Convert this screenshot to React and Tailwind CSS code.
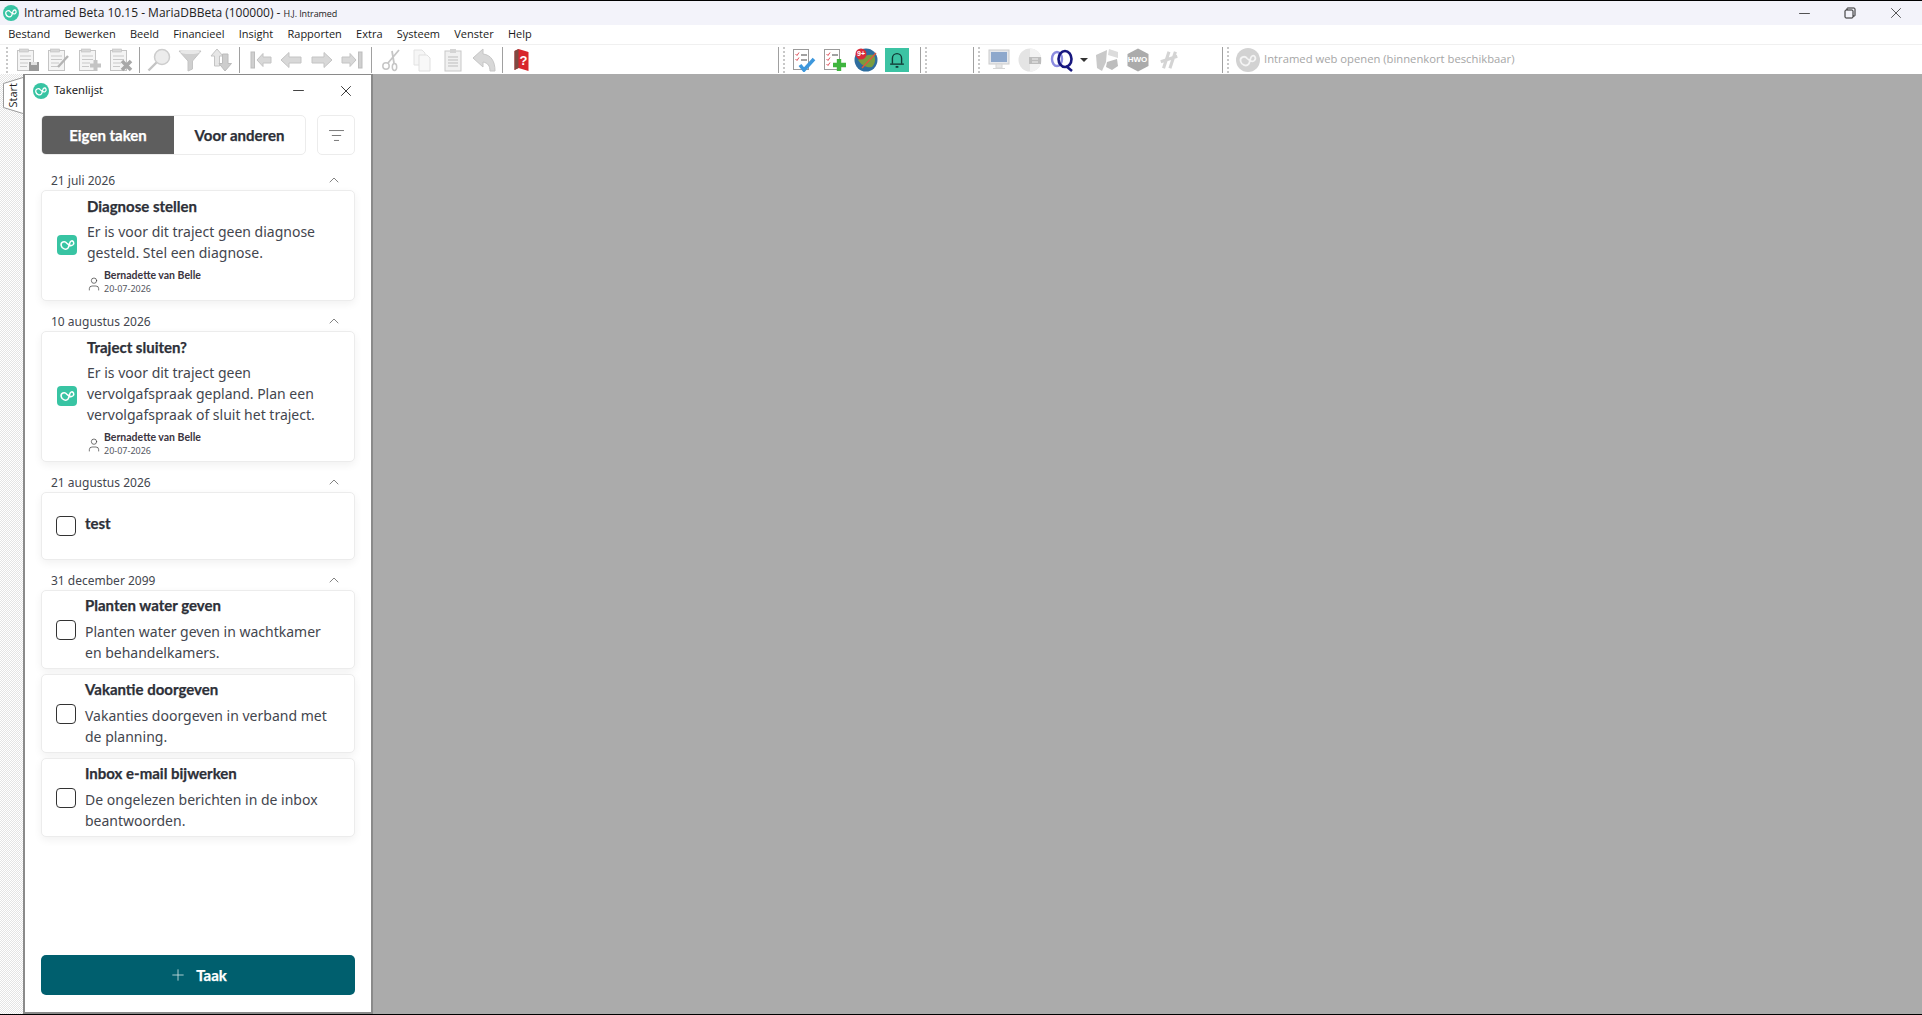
import React from "react";
import { ChevronUp, Minus, X, Plus, User, ListFilter } from "lucide-react";

const menus = ["Bestand", "Bewerken", "Beeld", "Financieel", "Insight", "Rapporten", "Extra", "Systeem", "Venster", "Help"];

const Heart = ({ className, stroke = "#fff" }) => (
  <svg viewBox="0 0 24 24" className={className} fill="none" stroke={stroke} strokeWidth="2.1" strokeLinecap="round" strokeLinejoin="round">
    <path transform="rotate(-14 12 12)" d="M11.5 10 C9.5 5.5 3 6 3 11.5 C3 16 8 19.5 11.5 17 C14.5 14.5 15 9 18 8.5 C21.5 8 22.5 13 19 14.5 C16.5 15.5 13.5 13.5 11.5 10 Z" />
  </svg>
);

const Doc = ({ children }) => (
  <svg viewBox="0 0 24 24" className="w-6 h-6">
    <rect x="1.5" y="2.5" width="16" height="20" fill="#f4f4f4" stroke="#c4c4c4" />
    <rect x="3.5" y="1" width="9" height="3" fill="#d8d8d8" stroke="#c0c0c0" strokeWidth="0.6" />
    <path d="M4 8h11M4 11.5h11M4 15h8M4 18.5h7" stroke="#c8c8c8" />
    {children}
  </svg>
);

const Arrow = ({ flip, bar }) => (
  <svg viewBox="0 0 24 24" className={`w-6 h-6 ${flip ? "-scale-x-100" : ""}`}>
    <path d={bar ? "M9 12 L15 5.5 V9 H23 V15 H15 V18.5 Z" : "M2 12 L10 4.5 V9 H22 V15 H10 V19.5 Z"} fill="#d8d8d8" stroke="#c4c4c4" />
    {bar && <rect x="3" y="4" width="3.5" height="16" fill="#d0d0d0" stroke="#bdbdbd" />}
  </svg>
);

const gray = [
  <Doc><rect x="13" y="14" width="10" height="9" fill="#9a9a9a" /><rect x="15" y="14" width="6" height="3" fill="#e2e2e2" /></Doc>,
  <Doc><path d="M11 19 L21 8" stroke="#b4b4b4" strokeWidth="2.4" /></Doc>,
  <Doc><path d="M17.5 12v11M12 17.5h11" stroke="#c4c4c4" strokeWidth="4" /></Doc>,
  <Doc><path d="M13 13l9 9M22 13l-9 9" stroke="#a8a8a8" strokeWidth="3.6" /></Doc>,
  "sep",
  <svg viewBox="0 0 24 24" className="w-6 h-6"><circle cx="15" cy="9" r="7.5" fill="#ececec" stroke="#cdcdcd" strokeWidth="1.5" /><path d="M9.5 14.5 L1.5 22.5" stroke="#c4c4c4" strokeWidth="2.4" /></svg>,
  <svg viewBox="0 0 24 24" className="w-6 h-6"><path d="M1 3 H23 L14.5 13 V21 L10 23 V13 Z" fill="#cfcfcf" stroke="#c4c4c4" /><ellipse cx="12" cy="4" rx="10" ry="2" fill="#e8e8e8" /></svg>,
  <svg viewBox="0 0 24 24" className="w-6 h-6"><path d="M8 1 L14 8 H10.5 V18 H5.5 V8 H2 Z" fill="#e6e6e6" stroke="#c4c4c4" /><path d="M16 23 L22.5 15.5 H19 V6 H13.5 V15.5 H10 Z" fill="#cdcdcd" stroke="#bcbcbc" /></svg>,
  "sep",
  <Arrow flip={false} bar />,
  <Arrow />,
  <Arrow flip />,
  <Arrow flip bar />,
  "sep",
  <svg viewBox="0 0 24 24" className="w-6 h-6" fill="none" stroke="#c6c6c6"><path d="M20 2 L9 15M13 3 L15 15" strokeWidth="1.8" /><circle cx="7" cy="18" r="3.2" strokeWidth="1.5" /><ellipse cx="15.5" cy="19" rx="2.2" ry="3.4" strokeWidth="1.5" /></svg>,
  <svg viewBox="0 0 24 24" className="w-6 h-6"><path d="M4 2h8l3 3v12H4z" fill="#f6f6f6" stroke="#e2e2e2" /><path d="M9 7h8l3 3v13H9z" fill="#f8f8f8" stroke="#e0e0e0" /></svg>,
  <svg viewBox="0 0 24 24" className="w-6 h-6"><rect x="4" y="3" width="16" height="20" fill="#f0f0f0" stroke="#c8c8c8" /><rect x="9" y="1" width="6" height="4" fill="#d4d4d4" /><path d="M7 9h10M7 12h10M7 15h10M7 18h10" stroke="#bdbdbd" /></svg>,
  <svg viewBox="0 0 24 24" className="w-6 h-6"><path d="M1 10 L11 1 V6 C19 7 23 13 23 23 H18 C18 18 16 15 11 14 V19 Z" fill="#d8d8d8" stroke="#c6c6c6" /></svg>,
  "sep",
  <svg viewBox="0 0 24 24" className="w-6 h-6 -translate-x-[2.5px]"><path d="M6 3 L10 1 L20 4 V23 L10 20 L6 22 Z" fill="#d8262c" /><path d="M6 3 L10 1 V20 L6 22 Z" fill="#7d4a42" /><text x="15" y="17" fontSize="13" fontWeight="700" fill="#fff" textAnchor="middle" fontFamily="Liberation Sans, sans-serif">?</text></svg>,
];

const Handle = () => <div className="w-0 h-[26px] border-l-2 border-dotted border-[#c8c8c8]" />;
const Sep = () => <div className="w-px h-[26px] bg-[#a0a0a0]" />;
const Slot = ({ children, className = "w-[31px]" }) => <div className={`${className} h-[30px] flex items-center justify-center`}>{children}</div>;

const Toolbar = () => (
  <div className="h-[30px] bg-white flex items-center shrink-0 border-t border-[#f0f0f0]">
    <div className="ml-[6px] mr-[4px]"><Handle /></div>
    {gray.map((g, i) => (g === "sep" ? <div key={i} className="ml-[2.5px] mr-[4px]"><Sep /></div> : <Slot key={i}>{g}</Slot>))}
    <div className="ml-[240px] flex items-center gap-[4px]"><Sep /><Handle /></div>
    <div className="ml-[3px] flex items-center">
      <Slot>
        <svg viewBox="0 0 24 24" className="w-6 h-6">
          <rect x="1.5" y="1.5" width="15" height="20" fill="#fff" stroke="#9a9a9a" />
          <path d="M3.5 6l1.5 1.5 2-3M3.5 11l1.5 1.5 2-3" stroke="#e0505a" fill="none" />
          <path d="M9 7h6M9 12h6" stroke="#444" />
          <path d="M8 17l4 5 10-11" stroke="#3d97dc" strokeWidth="3.6" fill="none" />
        </svg>
      </Slot>
      <Slot>
        <svg viewBox="0 0 24 24" className="w-6 h-6">
          <rect x="1.5" y="1.5" width="15" height="20" fill="#fff" stroke="#9a9a9a" />
          <path d="M3.5 6l1.5 1.5 2-3M3.5 11l1.5 1.5 2-3M3.5 16l1.5 1.5 2-3" stroke="#e0505a" fill="none" />
          <path d="M9 7h6" stroke="#444" />
          <path d="M16 11v12M10 17h13" stroke="#3fb53f" strokeWidth="4.4" />
        </svg>
      </Slot>
      <Slot>
        <svg viewBox="0 0 24 24" className="w-6 h-6">
          <circle cx="12" cy="12" r="11.5" fill="#2e6d9e" />
          <path d="M4 12c5-4 11-6 16-5 2 4 1 9-2 12-5 1-10-1-14-7z" fill="#7a9c3e" />
          <path d="M8 20 L22 5" stroke="#e0573c" strokeWidth="1.4" />
          <circle cx="7" cy="6" r="5.5" fill="#d82b3a" />
          <text x="7" y="8.4" fontSize="7" fontWeight="700" fill="#fff" textAnchor="middle" fontFamily="Liberation Sans, sans-serif">9+</text>
        </svg>
      </Slot>
      <Slot>
        <div className="w-6 h-6 bg-[#3cc3a3] flex items-center justify-center">
          <svg viewBox="0 0 24 24" className="w-[22px] h-[22px]" fill="none" stroke="#123a36" strokeWidth="1.5">
            <path d="M7 16V10a5 5 0 0 1 10 0v6" />
            <path d="M4.5 16.5h15" />
            <path d="M10.5 19.5h3" strokeWidth="2" />
          </svg>
        </div>
      </Slot>
    </div>
    <div className="ml-[8px] flex items-center gap-[4px]"><Sep /><Handle /></div>
    <div className="ml-[46px] flex items-center gap-[4px]"><Sep /><Handle /></div>
    <div className="ml-[3px] flex items-center">
      <Slot>
        <svg viewBox="0 0 24 24" className="w-6 h-6">
          <rect x="2" y="2" width="20" height="14" fill="#e6e8ec" stroke="#cccccc" />
          <rect x="4" y="4" width="16" height="10" fill="#8ea8cc" />
          <path d="M9 16h6v4H9zM6 20.5h12" stroke="#d6d6d6" fill="#e8e8e8" />
        </svg>
      </Slot>
      <Slot>
        <svg viewBox="0 0 24 24" className="w-6 h-6">
          <circle cx="12" cy="12" r="11.5" fill="#e4e4e4" />
          <path d="M12 .5a11.5 11.5 0 0 1 0 23z" fill="#f2f2f2" />
          <rect x="11" y="9" width="12" height="7" fill="#bdbdbd" />
          <path d="M14 11h6M14 14h6" stroke="#efefef" />
        </svg>
      </Slot>
      <svg viewBox="0 0 24 24" className="w-6 h-6 ml-[5px]" fill="none">
        <ellipse cx="7" cy="11" rx="5" ry="7" stroke="#8c8ce0" strokeWidth="2.4" />
        <ellipse cx="15" cy="11" rx="6.5" ry="8" stroke="#17177f" strokeWidth="2.6" />
        <path d="M16 18l6 5" stroke="#17177f" strokeWidth="2.6" />
      </svg>
      <div className="ml-[6px] mr-[3px] w-0 h-0 border-x-[4px] border-x-transparent border-t-[4px] border-t-[#333]" />
      <Slot>
        <svg viewBox="0 0 24 24" className="w-6 h-6">
          <path d="M1 7 L12 2 L11 14 L7 23 L2 20 Z" fill="#c9c9c9" />
          <path d="M14 1 L23 4 V10 L13 7 Z" fill="#dcdcdc" />
          <path d="M12 14 L22 11 L23 18 L17 22 L11 19 Z" fill="#bdbdbd" />
        </svg>
      </Slot>
      <Slot>
        <div className="relative w-6 h-6 flex items-center justify-center">
          <svg viewBox="0 0 24 24" className="absolute inset-0 w-6 h-6"><path d="M12 .5 L22.5 6 V18 L12 23.5 L1.5 18 V6 Z" fill="#ababab" /></svg>
          <span className="relative text-[8px] leading-none font-bold text-white font-['Liberation_Sans',sans-serif]">HWO</span>
        </div>
      </Slot>
      <Slot>
        <svg viewBox="0 0 24 24" className="w-[22px] h-[22px]" fill="none" stroke="#d4d4d4" strokeWidth="3.4">
          <path d="M12 3 L6 21M19 3 L13 21M3 14 L21 8" />
        </svg>
      </Slot>
    </div>
    <div className="ml-[38px] flex items-center gap-[4px]"><Sep /><Handle /></div>
    <div className="ml-[7px] w-6 h-6 rounded-full bg-[#d2d2d2] flex items-center justify-center">
      <Heart className="w-[20px] h-[20px]" stroke="#f4f4f4" />
    </div>
    <span className="ml-[4px] text-[11.25px] text-[#a6a6a6] font-['Open_Sans',sans-serif] whitespace-nowrap">Intramed web openen (binnenkort beschikbaar)</span>
  </div>
);

const TitleBar = () => (
  <div className="h-[24px] mt-px bg-[#f3f3fa] flex items-center shrink-0">
    <div className="ml-[3px] w-[16px] h-[16px] rounded-full bg-[#38c4a3] flex items-center justify-center">
      <Heart className="w-[14px] h-[14px]" />
    </div>
    <span className="ml-[5px] text-[12px] text-[#222] font-['Open_Sans',sans-serif] whitespace-nowrap">Intramed Beta 10.15 - MariaDBBeta (100000) - <span className="text-[9px] font-medium tracking-[-0.1px]">H.J. Intramed</span></span>
    <div className="ml-auto mr-[3px] flex items-center text-[#222]">
      <Slot className="w-[46px]"><Minus size={17} strokeWidth={1.1} /></Slot>
      <Slot className="w-[46px]">
        <svg viewBox="0 0 12 12" className="w-[12px] h-[12px]" fill="none" stroke="#222">
          <rect x="1" y="3" width="8" height="8" rx="1" />
          <path d="M3 3V1.5a.5.5 0 0 1 .5-.5H10a1 1 0 0 1 1 1v6.5a.5.5 0 0 1-.5.5H9" />
        </svg>
      </Slot>
      <Slot className="w-[46px]"><X size={18} strokeWidth={1} /></Slot>
    </div>
  </div>
);

const MenuBar = () => (
  <div className="h-[19px] bg-white flex items-center pl-[1px] shrink-0">
    {menus.map((m) => (
      <span key={m} className="px-[7.15px] text-[11px] text-[#1a1a1a] font-['Open_Sans',sans-serif]">{m}</span>
    ))}
  </div>
);

const cardCls = "bg-white border border-[#ececec] rounded-[5px] shadow-[0_3px_8px_rgba(0,0,0,0.06)]";
const titleCls = "text-[15px] leading-[20px] font-bold [-webkit-text-stroke:0.25px] text-[#2d3038] font-['Lato',sans-serif]";
const bodyCls = "text-[14px] leading-[21px] text-[#43464e] font-['Noto_Sans',sans-serif]";
const tabCls = "flex items-center justify-center text-[15px] font-bold [-webkit-text-stroke:0.25px] font-['Lato',sans-serif]";

const DateRow = ({ children }) => (
  <div className="h-[20px] pl-[10px] pr-[13px] flex items-center justify-between">
    <span className="mt-[1px] text-[12px] text-[#43464e] font-['Noto_Sans',sans-serif]">{children}</span>
    <ChevronUp size={16} strokeWidth={1} className="text-[#444]" />
  </div>
);

const SystemCard = ({ title, lines, height }) => (
  <div className={`${cardCls} ${height} flex items-center pl-[15px]`}>
    <div className="w-5 h-5 -mt-[2px] rounded-[4px] bg-[#38c4a3] flex items-center justify-center shrink-0">
      <Heart className="w-[17px] h-[17px]" />
    </div>
    <div className="ml-[10px] flex flex-col">
      <div className={titleCls}>{title}</div>
      <div className={`${bodyCls} mt-[5px]`}>
        {lines.map((l) => <div key={l}>{l}</div>)}
      </div>
      <div className="flex items-center mt-[6px]">
        <User size={16} strokeWidth={1.1} className="text-[#444] mt-[3px] -ml-px" />
        <div className="ml-[2px] flex flex-col">
          <span className="text-[10.5px] leading-[13px] font-bold text-[#3a3440] font-['Lato',sans-serif]">Bernadette van Belle</span>
          <span className="text-[9px] leading-[13px] text-[#55585f] font-['Noto_Sans',sans-serif]">20-07-2026</span>
        </div>
      </div>
    </div>
  </div>
);

const Checkbox = () => <div className="w-5 h-5 shrink-0 rounded-[4px] border border-[#333] bg-white" />;

const TodoCard = ({ title, lines }) => (
  <div className={`${cardCls} h-[79px] flex items-center pl-[14px]`}>
    <Checkbox />
    <div className="ml-[9px] -mt-[2px]">
      <div className={titleCls}>{title}</div>
      <div className={`${bodyCls} mt-[6px]`}>
        {lines.map((l) => <div key={l}>{l}</div>)}
      </div>
    </div>
  </div>
);

const TaskPanel = () => (
  <div className="w-[350px] shrink-0 bg-white border-x-2 border-b-2 border-t border-[#8a8a8a] flex flex-col px-[16px] pb-[17px]">
    <div className="h-[29px] -mx-[8px] mt-[1px] flex items-center">
      <div className="w-[16px] h-[16px] rounded-full bg-[#38c4a3] flex items-center justify-center">
        <Heart className="w-[14px] h-[14px]" />
      </div>
      <span className="ml-[5px] text-[11.25px] text-[#222] font-['Noto_Sans',sans-serif]">Takenlijst</span>
      <Minus size={17} strokeWidth={1.2} className="ml-auto text-[#222]" />
      <X size={18} strokeWidth={1.1} className="ml-[30px] mr-[8px] text-[#111]" />
    </div>
    <div className="mt-[10px] flex gap-[11px]">
      <div className="flex flex-1 h-[40px] border border-[#ececec] rounded-[5px] overflow-hidden">
        <div className={`${tabCls} w-[132px] bg-[#5e5e5e] text-white`}>Eigen taken</div>
        <div className={`${tabCls} flex-1 text-[#2d3038]`}>Voor anderen</div>
      </div>
      <div className="w-[38px] h-[40px] border border-[#ececec] rounded-[5px] flex items-center justify-center">
        <ListFilter size={17} strokeWidth={1} className="text-[#444]" />
      </div>
    </div>
    <div className="mt-[15px] flex flex-col gap-[10px]">
      <div>
        <DateRow>21 juli 2026</DateRow>
        <SystemCard height="h-[111px]" title="Diagnose stellen" lines={["Er is voor dit traject geen diagnose", "gesteld. Stel een diagnose."]} />
      </div>
      <div>
        <DateRow>10 augustus 2026</DateRow>
        <SystemCard height="h-[131px]" title="Traject sluiten?" lines={["Er is voor dit traject geen", "vervolgafspraak gepland. Plan een", "vervolgafspraak of sluit het traject."]} />
      </div>
      <div>
        <DateRow>21 augustus 2026</DateRow>
        <div className={`${cardCls} h-[68px] flex items-start pl-[14px] pt-[23px]`}>
          <Checkbox />
          <div className={`${titleCls} ml-[9px] -mt-[3px]`}>test</div>
        </div>
      </div>
      <div>
        <DateRow>31 december 2099</DateRow>
        <div className="flex flex-col gap-[5px]">
          <TodoCard title="Planten water geven" lines={["Planten water geven in wachtkamer", "en behandelkamers."]} />
          <TodoCard title="Vakantie doorgeven" lines={["Vakanties doorgeven in verband met", "de planning."]} />
          <TodoCard title="Inbox e-mail bijwerken" lines={["De ongelezen berichten in de inbox", "beantwoorden."]} />
        </div>
      </div>
    </div>
    <div className="mt-auto h-[40px] rounded-[5px] bg-[#005f6e] text-white flex items-center justify-center gap-[9px]">
      <Plus size={18} strokeWidth={1.1} className="text-[#cfe3e6]" />
      <span className="text-[15px] font-bold [-webkit-text-stroke:0.25px] font-['Lato',sans-serif]">Taak</span>
    </div>
  </div>
);

export default function App() {
  return (
    <div className="w-[1922px] h-[1015px] flex flex-col overflow-hidden bg-black">
      <TitleBar />
      <MenuBar />
      <Toolbar />
      <div className="flex-1 min-h-0 flex bg-[#ababab] mb-px">
        <div className="w-[23px] shrink-0 relative bg-[repeating-conic-gradient(#e4e4e4_0_25%,#ffffff_0_50%)] bg-[length:2px_2px]">
          <div className="absolute left-[3px] top-[3px] w-[20px] h-[37px] flex items-center justify-center">
            <svg viewBox="0 0 20 37" className="absolute inset-0 w-[20px] h-[37px]">
              <path d="M20 .5 L.5 6.5 V30.5 L20 36.5" fill="#fff" stroke="#9a9a9a" />
            </svg>
            <span className="relative text-[11px] text-[#222] -rotate-90 font-['Open_Sans',sans-serif]">Start</span>
          </div>
        </div>
        <TaskPanel />
        <div className="flex-1" />
      </div>
    </div>
  );
}
